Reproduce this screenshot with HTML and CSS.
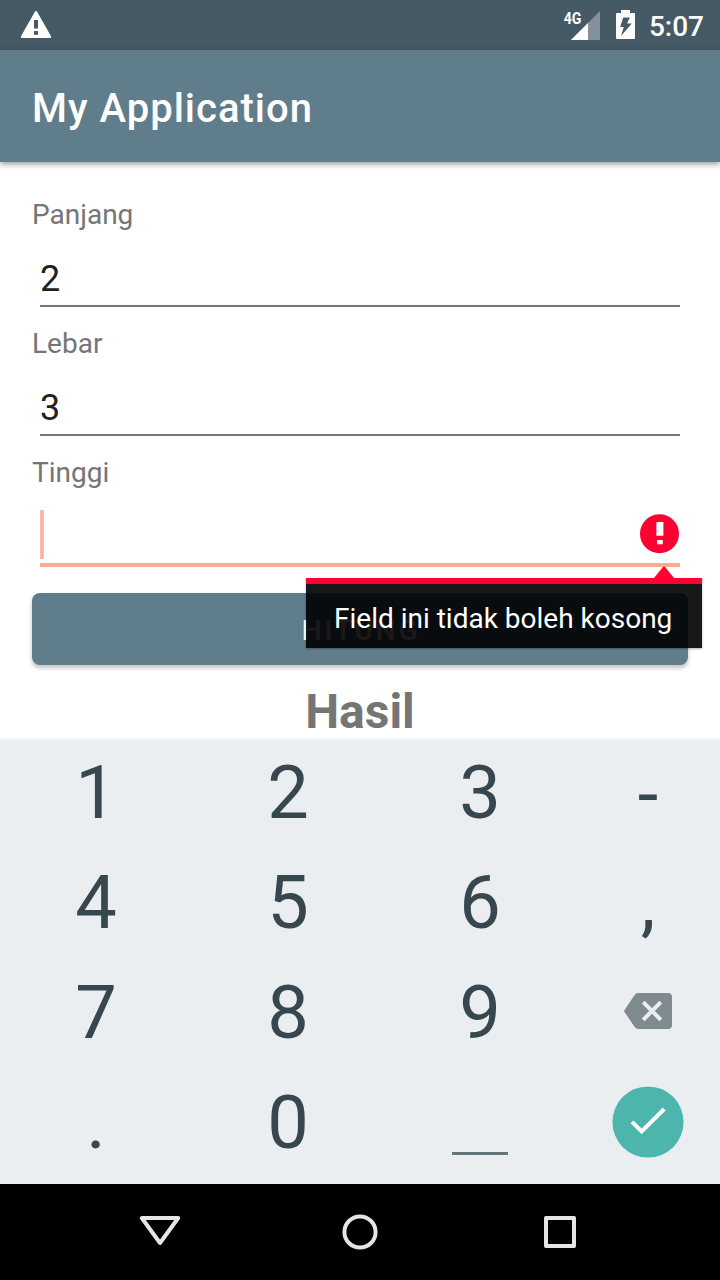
FILE: index.html
```html
<!DOCTYPE html>
<html lang="id">
<head>
<meta charset="utf-8">
<title>My Application</title>
<link rel="stylesheet" href="styles.css">
</head>
<body>
<div class="screen">
  <header class="status-bar">
    <svg class="warning" width="32" height="30" viewBox="0 0 32 30"><path fill="#fff" fill-rule="evenodd" d="M15 1.6Q16 .4 17 1.6L31 26.2Q31.4 28 30 28H2Q.4 28 1 26.2ZM14 10V18.5H18V10ZM14 21V24.7H18V21Z"/></svg>
    <div class="status-icons">
      <span class="network">4G</span>
      <svg class="signal" width="29" height="29" viewBox="0 0 29 29"><path fill="#83919a" d="M29 0V29H0Z"/><path fill="#fff" d="M17 12V29H0Z"/></svg>
      <svg class="battery" width="19" height="29" viewBox="0 0 19 29"><path fill="#fff" d="M5 0H14V3H18Q19 3 19 4V28Q19 29 18 29H1Q0 29 0 28V4Q0 3 1 3H5Z"/><path fill="#455a64" d="M7.2 7.5H13.8L11 13.5H15.8L5 26L7.8 17H4.2Z"/></svg>
      <span class="time">5:07</span>
    </div>
  </header>
  <div class="app-bar"><h1 class="title">My Application</h1></div>
  <main class="form">
    <label class="label">Panjang</label>
    <div class="field">2</div>
    <label class="label">Lebar</label>
    <div class="field">3</div>
    <label class="label">Tinggi</label>
    <div class="field field-error">
      <span class="caret"></span>
      <svg class="error-icon" width="40" height="40" viewBox="0 0 40 40"><circle cx="19.5" cy="19.8" r="19.5" fill="#ff0033"/><path fill="#fff" d="M16.4 8H23.4V21.8H16.4ZM17 26H22.8V30.3H17Z"/></svg>
    </div>
    <div class="button">HITUNG</div>
    <div class="result">Hasil</div>
    <div class="tooltip">
      <svg class="tooltip-arrow" width="20" height="12" viewBox="0 0 20 12"><path fill="#ff0033" d="M0 12L8.5 1.5Q10 -.5 11.5 1.5L20 12Z"/></svg>
      <span>Field ini tidak boleh kosong</span>
    </div>
  </main>
  <section class="keyboard">
    <div class="key">1</div><div class="key">2</div><div class="key">3</div><div class="key minus">-</div>
    <div class="key">4</div><div class="key">5</div><div class="key">6</div><div class="key">,</div>
    <div class="key">7</div><div class="key">8</div><div class="key">9</div>
    <div class="key key-delete"><svg width="48" height="36" viewBox="0 0 48 36"><path fill="#808b8f" d="M14 0H44Q48 0 48 4V32Q48 36 44 36H14Q12 36 10.8 34.3L.5 19Q-.2 18 .5 17L10.8 1.7Q12 0 14 0Z"/><path stroke="#ebeef1" stroke-width="4" d="M19.2 9.2L36.8 26.8M36.8 9.2L19.2 26.8"/></svg></div>
    <div class="key">.</div><div class="key">0</div><div class="key space"><span class="space-line"></span></div>
    <div class="key key-done"><svg width="72" height="72" viewBox="0 0 72 72"><circle cx="36" cy="36" r="35.6" fill="#4db6ac"/><path fill="none" stroke="#fff" stroke-width="4" d="M20 35.8L29.7 45.5L52.2 23"/></svg></div>
  </section>
  <nav class="nav-bar">
    <svg width="44" height="44" viewBox="0 0 44 44"><path fill="none" stroke="#e6e6e6" stroke-width="4" stroke-linejoin="round" d="M3.8 8H40.2L22 33Z"/></svg>
    <svg width="44" height="44" viewBox="0 0 44 44"><circle cx="22" cy="22" r="15.6" fill="none" stroke="#e6e6e6" stroke-width="4"/></svg>
    <svg width="44" height="44" viewBox="0 0 44 44"><rect x="8" y="8" width="28" height="28" fill="none" stroke="#e6e6e6" stroke-width="4" stroke-linejoin="round"/></svg>
  </nav>
</div>
</body>
</html>
```

FILE: styles.css
```css
* { box-sizing: border-box; }
body { margin: 0; background: #fff; font-family: Roboto, sans-serif; }
svg { display: block; }
.screen { width: 720px; height: 1280px; display: flex; flex-direction: column; overflow: hidden; }
.status-bar { height: 50px; flex: none; background: #455a64; color: #fff; display: flex; justify-content: space-between; padding: 10px 16px 0 20px; }
.status-icons { display: flex; align-items: flex-start; }
.network { font-size: 17px; font-weight: 700; line-height: 17px; transform: scaleX(.83); transform-origin: right; margin-right: -10px; }
.signal { margin: 1px 16px 0 0; }
.battery { margin-right: 14px; }
.time { font-size: 28px; font-weight: 500; line-height: 33px; }
.app-bar { height: 112px; flex: none; background: #607d8b; display: flex; align-items: center; padding: 4px 32px 0; box-shadow: 0 2px 6px rgba(0,0,0,.42); position: relative; }
.title { margin: 0; color: #fff; font-size: 40px; font-weight: 500; line-height: 47px; letter-spacing: 1px; }
.form { height: 576px; flex: none; display: flex; flex-direction: column; padding: 32px 32px 0; position: relative; }
.label { height: 38px; flex: none; font-size: 28px; line-height: 42px; color: #757575; }
.field { height: 75px; flex: none; margin: 0 8px 16px; border-bottom: 2px solid #757575; color: #212121; font-size: 36px; line-height: 42px; padding-top: 26px; }
.field-error { height: 77px; margin-bottom: 26px; border-bottom: 4px solid #ffab91; display: flex; justify-content: space-between; padding-top: 20px; }
.caret { width: 4px; height: 49px; background: linear-gradient(90deg, #ffc4b2, #ffab91 50%, #ffc4b2); }
.error-icon { margin-top: 4px; }
.button { height: 72px; flex: none; border-radius: 8px; background: #607d8b; color: #fff; font-size: 28px; font-weight: 500; letter-spacing: 2.8px; line-height: 75px; padding-left: 2px; text-align: center; box-shadow: 0 3px 4px rgba(0,0,0,.24); }
.result { margin-top: 17px; color: #757575; font-size: 48px; font-weight: 700; line-height: 60px; text-align: center; }
.tooltip { position: absolute; left: 306px; top: 416px; width: 396px; height: 70px; border-top: 6px solid #ff0033; background: rgba(0,0,0,.9); color: #fff; font-size: 28px; line-height: 69px; padding-left: 28px; white-space: nowrap; box-shadow: 0 1px 2px rgba(0,0,0,.3); background-clip: padding-box; }
.tooltip-arrow { position: absolute; left: 348px; top: -18px; }
.keyboard { height: 446px; flex: none; display: grid; grid-template-columns: 192px 192px 192px 144px; grid-template-rows: repeat(4, 110px); background: #ebeef1; border-top: 2px solid #f3f6f8; padding-bottom: 4px; color: #37474f; }
.key { display: flex; align-items: center; justify-content: center; font-size: 74px; line-height: 106px; padding-bottom: 4px; }
.minus { padding-bottom: 0; }
.key-delete { padding-bottom: 8px; }
.key-done { padding-bottom: 6px; }
.space { align-items: flex-end; padding-bottom: 25px; }
.space-line { width: 56px; height: 3px; background: #65757c; }
.nav-bar { height: 96px; flex: none; background: #000; display: flex; justify-content: center; align-items: center; gap: 156px; }
```
